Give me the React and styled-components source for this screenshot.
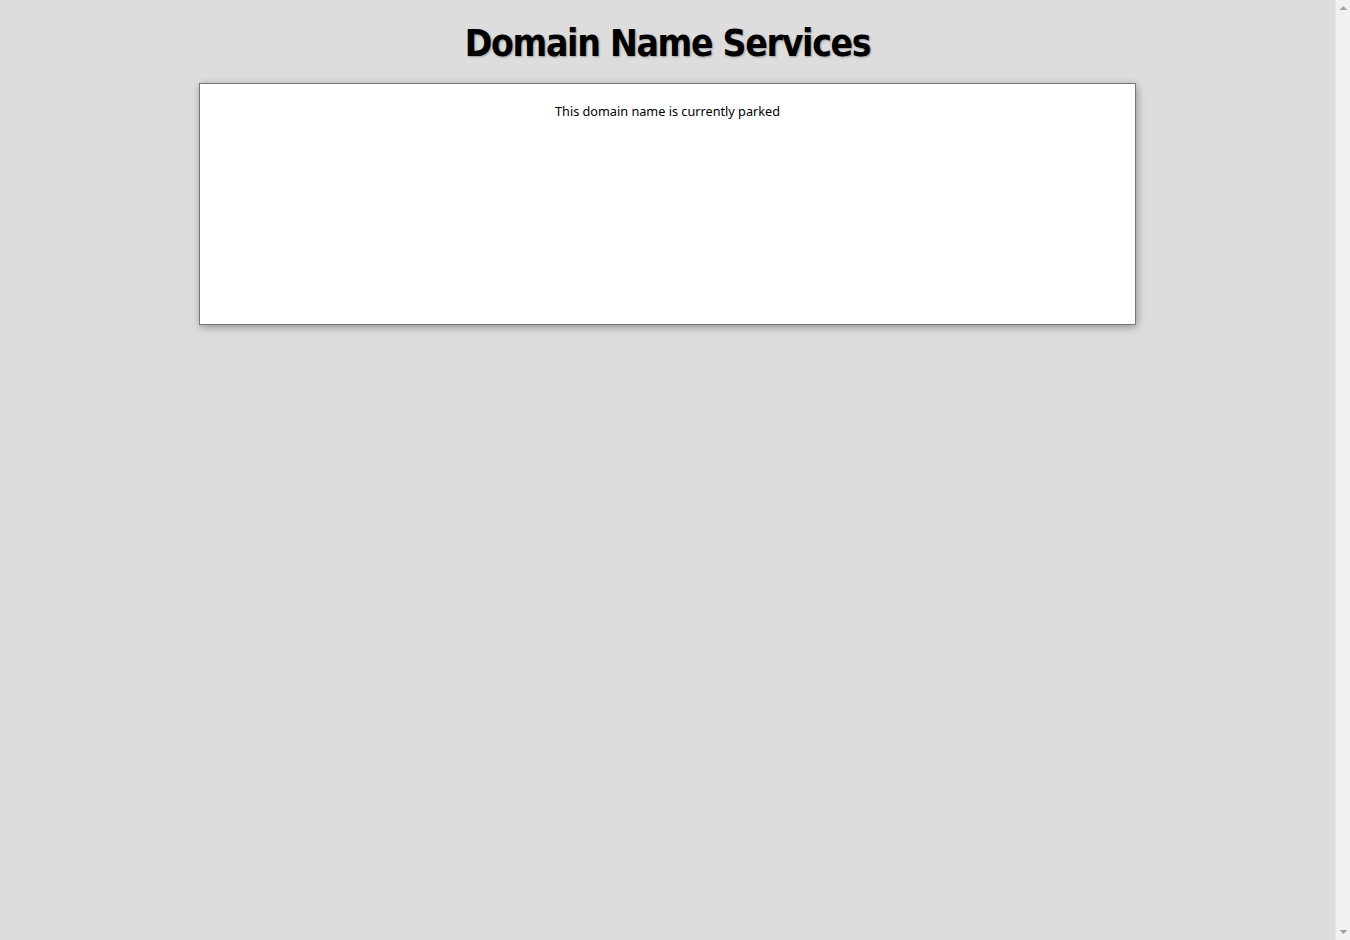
import React from 'react';
import styled, { createGlobalStyle } from 'styled-components';

const GlobalStyle = createGlobalStyle`
  html, body {
    margin: 0;
    padding: 0;
    background: #dddddd;
  }
  body {
    font-family: "Noto Sans", "Open Sans", sans-serif;
    color: #000;
  }
`;

function App() {
  return (
    <>
      <GlobalStyle />
      <Page>
        <Title>Domain Name Services</Title>
        <ParkedBox>
          <Message>This domain name is currently parked</Message>
        </ParkedBox>
      </Page>
      <ScrollTrack>
        <ScrollArrow viewBox="0 0 15 15">
          <path d="M3.5 10 L7.5 6 L11.5 10 Z" fill="#a3a3a3" />
        </ScrollArrow>
        <ScrollArrow viewBox="0 0 15 15">
          <path d="M3.5 5 L7.5 9 L11.5 5 Z" fill="#a3a3a3" />
        </ScrollArrow>
      </ScrollTrack>
    </>
  );
}

const Page = styled.div`
  display: flex;
  flex-direction: column;
  align-items: center;
  padding: 22px 15px 0 0;
  min-height: 940px;
  box-sizing: border-box;
`;

const Title = styled.h1`
  margin: 0 0 17px;
  font-family: "DejaVu Sans Condensed", "DejaVu Sans", Tahoma, sans-serif;
  font-stretch: condensed;
  font-size: 37px;
  font-weight: bold;
  line-height: 44px;
  letter-spacing: -1.3px;
  text-shadow: 1px 1px 2px #999;
`;

const ParkedBox = styled.div`
  box-sizing: border-box;
  width: 937px;
  height: 242px;
  background: #ffffff;
  border: 1px solid #777;
  box-shadow: 1px 2px 8px rgba(0, 0, 0, 0.35);
  padding-top: 17px;
  text-align: center;
`;

const Message = styled.p`
  margin: 0;
  font-size: 12.7px;
  line-height: 20px;
`;

const ScrollTrack = styled.div`
  position: fixed;
  top: 0;
  right: 0;
  bottom: 0;
  width: 15px;
  background: #f1f1f1;
  border-left: 1px solid #e8e8e8;
  box-sizing: border-box;
  display: flex;
  flex-direction: column;
  justify-content: space-between;
`;

const ScrollArrow = styled.svg`
  width: 15px;
  height: 15px;
  display: block;
`;

export default App;
